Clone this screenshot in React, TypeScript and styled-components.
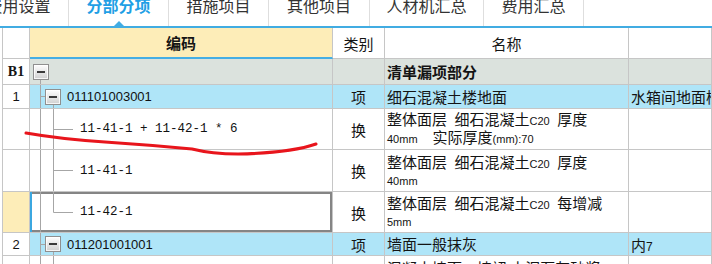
import React, { useId } from 'react';
import styled, { createGlobalStyle } from 'styled-components';

const GlobalStyle = createGlobalStyle`
  html, body { margin: 0; padding: 0; background: #fff; }
  body {
    width: 712px; height: 264px; overflow: hidden;
    font-family: "Noto Sans CJK SC", "Liberation Sans", sans-serif;
    color: #141414;
  }
`;

const COLS = '28px 303px 52px 244px 1fr';
const LINE = '#c6c6c6';

const Page = styled.div`
  position: relative;
  width: 712px;
  height: 264px;
  overflow: hidden;
  background: #fff;
`;

const TabBar = styled.div`
  display: flex;
  height: 26px;
  margin-left: -31px;
  border-bottom: 2px solid #41ace2;
  background: #fff;
`;

const Tab = styled.div<{ $w: number; $active?: boolean }>`
  position: relative;
  box-sizing: border-box;
  flex: 0 0 ${p => p.$w}px;
  border-right: 1px solid #dedede;
  display: flex;
  justify-content: center;
  align-items: flex-start;
  font-size: 16px;
  line-height: 16px;
  color: ${p => (p.$active ? '#1f9fe5' : '#333')};
  font-weight: ${p => (p.$active ? 700 : 400)};
  &::after {
    content: '';
    display: ${p => (p.$active ? 'block' : 'none')};
    position: absolute;
    left: 50%;
    bottom: 0;
    margin-left: -5px;
    border-left: 5px solid transparent;
    border-right: 5px solid transparent;
    border-bottom: 5px solid #41ace2;
  }
`;

const TabLabel = styled.span`
  margin-top: -3px;
  white-space: nowrap;
`;

const Grid = styled.div`
  display: flex;
  flex-direction: column;
  padding-left: 2px;
`;

const Row = styled.div<{ $h: number }>`
  display: grid;
  grid-template-columns: ${COLS};
  height: ${p => p.$h}px;
  flex: 0 0 ${p => p.$h}px;
`;

const Cell = styled.div<{ $bg?: string }>`
  box-sizing: border-box;
  min-width: 0;
  border-right: 1px solid ${LINE};
  border-bottom: 1px solid ${LINE};
  background: ${p => p.$bg || '#fff'};
  display: flex;
  align-items: center;
  overflow: hidden;
  white-space: nowrap;
  font-size: 15px;
`;

const NumCell = styled(Cell)<{ $bold?: boolean }>`
  border-left: 1px solid ${LINE};
  justify-content: center;
  font-family: ${p => (p.$bold ? '"Liberation Serif", serif' : '"Liberation Sans", sans-serif')};
  font-weight: ${p => (p.$bold ? 700 : 400)};
  font-size: ${p => (p.$bold ? 14 : 13)}px;
`;

const HeadCell = styled(Cell)<{ $sorted?: boolean }>`
  justify-content: center;
  font-weight: ${p => (p.$sorted ? 700 : 400)};
  border-bottom: ${p => (p.$sorted ? '2px solid #45aee4' : `1px solid ${LINE}`)};
`;

const CodeCell = styled(Cell)<{ $selected?: boolean }>`
  align-items: stretch;
  box-shadow: ${p =>
    p.$selected
      ? 'inset 2px 0 0 #3ba7e0, inset 0 2px 0 #858585, inset -2px 0 0 #858585, inset 0 -2px 0 #858585'
      : 'none'};
`;

const CodeText = styled.span<{ $mono?: boolean }>`
  align-self: center;
  font-family: ${p => (p.$mono ? '"Liberation Mono", monospace' : '"Liberation Sans", sans-serif')};
  font-size: ${p => (p.$mono ? 12.5 : 13)}px;
  color: #111;
`;

const TypeCell = styled(Cell)`
  justify-content: center;
`;

const NameCell = styled(Cell)<{ $bold?: boolean }>`
  padding-left: 2px;
  flex-direction: column;
  align-items: flex-start;
  justify-content: center;
  font-weight: ${p => (p.$bold ? 700 : 400)};
`;

const NameLine = styled.div<{ $small?: boolean }>`
  line-height: ${p => (p.$small ? 13 : 16)}px;
`;

const Latin = styled.span<{ $size?: number }>`
  font-family: "Liberation Sans", sans-serif;
  font-size: ${p => p.$size || 11}px;
`;

const NoteCell = styled(Cell)`
  padding-left: 2px;
`;

const Annotation = styled.svg`
  position: absolute;
  left: 0;
  top: 0;
  pointer-events: none;
`;

type GutterKind = 'root' | 'group' | 'leaf' | 'leafLast';

const Toggle: React.FC<{ x: number; y: number; gid: string }> = ({ x, y, gid }) => (
  <g>
    <rect x={x + 0.5} y={y + 0.5} width={15} height={15} fill={`url(#${gid})`} stroke="#8f8f8f" />
    <rect x={x + 1.5} y={y + 1.5} width={13} height={13} fill="none" stroke="#fff" strokeOpacity={0.8} />
    <line x1={x + 4} x2={x + 12} y1={y + 8} y2={y + 8} stroke="#3a3a3a" strokeWidth={2} />
  </g>
);

const TreeGutter: React.FC<{ kind: GutterKind; h: number }> = ({ kind, h }) => {
  const gid = useId().replace(/:/g, '');
  const w = kind === 'root' ? 37 : kind === 'group' ? 37 : 50;
  const ty = Math.round((h - 16) / 2);
  const cy = Math.floor(h / 2) + 0.5;
  const stroke = '#a6a6a6';
  return (
    <svg width={w} height={h} style={{ flex: `0 0 ${w}px` }}>
      <defs>
        <linearGradient id={gid} x1="0" y1="0" x2="0" y2="1">
          <stop offset="0" stopColor="#ffffff" />
          <stop offset="1" stopColor="#cfcfcf" />
        </linearGradient>
      </defs>
      {kind === 'root' && (
        <>
          <line x1={10.5} x2={10.5} y1={ty + 16} y2={h} stroke={stroke} />
          <Toggle x={3} y={ty} gid={gid} />
        </>
      )}
      {kind === 'group' && (
        <>
          <line x1={10.5} x2={10.5} y1={0} y2={h} stroke={stroke} />
          <line x1={10.5} x2={15} y1={cy} y2={cy} stroke={stroke} />
          <line x1={23.5} x2={23.5} y1={ty + 16} y2={h} stroke={stroke} />
          <Toggle x={15} y={ty} gid={gid} />
        </>
      )}
      {(kind === 'leaf' || kind === 'leafLast') && (
        <>
          <line x1={10.5} x2={10.5} y1={0} y2={h} stroke={stroke} />
          <line x1={23.5} x2={23.5} y1={0} y2={kind === 'leafLast' ? cy : h} stroke={stroke} />
          <line x1={23.5} x2={43} y1={cy} y2={cy} stroke={stroke} />
        </>
      )}
    </svg>
  );
};

const BLUE = '#afe5f8';
const GREEN = '#dbe2dd';
const YELLOW = '#fdedb8';
const SP = '\u2002';

const tabs = [
  { label: '费用设置', w: 100 },
  { label: '分部分项', w: 100, active: true },
  { label: '措施项目', w: 100 },
  { label: '其他项目', w: 101 },
  { label: '人材机汇总', w: 114 },
  { label: '费用汇总', w: 100 },
];

const SubText: React.FC<{ parts: (string | [string])[] }> = ({ parts }) => (
  <>
    {parts.map((p, i) => (typeof p === 'string' ? <span key={i}>{p}</span> : <Latin key={i}>{p[0]}</Latin>))}
  </>
);

export default function App() {
  return (
    <Page>
      <GlobalStyle />
      <TabBar>
        {tabs.map(t => (
          <Tab key={t.label} $w={t.w} $active={t.active}>
            <TabLabel>{t.label}</TabLabel>
          </Tab>
        ))}
      </TabBar>

      <Grid>
        <Row $h={31}>
          <NumCell />
          <HeadCell $bg={YELLOW} $sorted>编码</HeadCell>
          <HeadCell>类别</HeadCell>
          <HeadCell>名称</HeadCell>
          <HeadCell />
        </Row>

        <Row $h={26}>
          <NumCell $bold>B1</NumCell>
          <CodeCell $bg={GREEN}>
            <TreeGutter kind="root" h={25} />
          </CodeCell>
          <TypeCell $bg={GREEN} />
          <NameCell $bg={GREEN} $bold>
            <NameLine>清单漏项部分</NameLine>
          </NameCell>
          <NoteCell $bg={GREEN} />
        </Row>

        <Row $h={24}>
          <NumCell>1</NumCell>
          <CodeCell $bg={BLUE}>
            <TreeGutter kind="group" h={23} />
            <CodeText>011101003001</CodeText>
          </CodeCell>
          <TypeCell $bg={BLUE}>项</TypeCell>
          <NameCell $bg={BLUE}>
            <NameLine>细石混凝土楼地面</NameLine>
          </NameCell>
          <NoteCell $bg={BLUE}>水箱间地面楼面做法</NoteCell>
        </Row>

        <Row $h={41}>
          <NumCell />
          <CodeCell>
            <TreeGutter kind="leaf" h={40} />
            <CodeText $mono>11-41-1 + 11-42-1 * 6</CodeText>
          </CodeCell>
          <TypeCell>换</TypeCell>
          <NameCell>
            <NameLine>
              <SubText parts={[`整体面层${SP}细石混凝土`, ['C20'], `${SP}厚度`]} />
            </NameLine>
            <NameLine>
              <SubText parts={[['40mm'], `${SP}${SP}实际厚度`, ['(mm):70']]} />
            </NameLine>
          </NameCell>
          <NoteCell />
        </Row>

        <Row $h={42}>
          <NumCell />
          <CodeCell>
            <TreeGutter kind="leaf" h={41} />
            <CodeText $mono>11-41-1</CodeText>
          </CodeCell>
          <TypeCell>换</TypeCell>
          <NameCell>
            <NameLine>
              <SubText parts={[`整体面层${SP}细石混凝土`, ['C20'], `${SP}厚度`]} />
            </NameLine>
            <NameLine $small>
              <Latin>40mm</Latin>
            </NameLine>
          </NameCell>
          <NoteCell />
        </Row>

        <Row $h={41}>
          <NumCell $bg={YELLOW} />
          <CodeCell $selected>
            <TreeGutter kind="leafLast" h={40} />
            <CodeText $mono>11-42-1</CodeText>
          </CodeCell>
          <TypeCell>换</TypeCell>
          <NameCell>
            <NameLine>
              <SubText parts={[`整体面层${SP}细石混凝土`, ['C20'], `${SP}每增减`]} />
            </NameLine>
            <NameLine $small>
              <Latin>5mm</Latin>
            </NameLine>
          </NameCell>
          <NoteCell />
        </Row>

        <Row $h={23}>
          <NumCell>2</NumCell>
          <CodeCell $bg={BLUE}>
            <TreeGutter kind="group" h={22} />
            <CodeText>011201001001</CodeText>
          </CodeCell>
          <TypeCell $bg={BLUE}>项</TypeCell>
          <NameCell $bg={BLUE}>
            <NameLine>墙面一般抹灰</NameLine>
          </NameCell>
          <NoteCell $bg={BLUE}>
            <span>
              内<Latin $size={12}>7</Latin>
            </span>
          </NoteCell>
        </Row>

        <Row $h={40}>
          <NumCell />
          <CodeCell>
            <TreeGutter kind="leaf" h={39} />
            <CodeText $mono>12-1-3</CodeText>
          </CodeCell>
          <TypeCell>定</TypeCell>
          <NameCell>
            <NameLine>混凝土墙面、墙裙 水泥石灰砂浆</NameLine>
            <NameLine>混合砂浆面</NameLine>
          </NameCell>
          <NoteCell />
        </Row>
      </Grid>

      <Annotation width={712} height={264} viewBox="0 0 712 264">
        <path
          d="M26,133 Q60,139 105,142 T192,149 Q212,154 238,154 Q290,153 316,144"
          fill="none"
          stroke="#e8151c"
          strokeWidth={3}
          strokeLinecap="round"
          strokeLinejoin="round"
        />
      </Annotation>
    </Page>
  );
}
